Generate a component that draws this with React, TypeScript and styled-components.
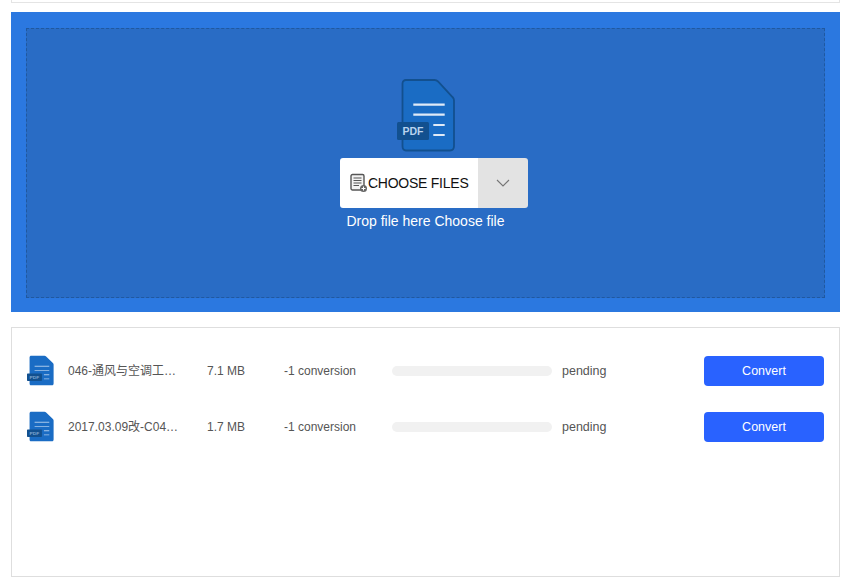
import styled, { createGlobalStyle } from 'styled-components';

type FileItem = {
  name: string;
  size: string;
}

const files: FileItem[] = [
  { name: '046-通风与空调工…', size: '7.1 MB' },
  { name: '2017.03.09改-C04…', size: '1.7 MB' },
];

function PdfIcon({ small }: { small?: boolean }) {
  return (
    <svg width={small ? 28 : 60} height={small ? 31 : 74} viewBox="0 0 60 74" fill="none" preserveAspectRatio="none">
      <path
        d="M9 2H37.500C39 2 40 2.500 41 3.500L55.500 19C56.500 20 57 21 57 22.500V68C57 70.800 55.500 72.500 53 72.500H9C6.800 72.500 5.500 71 5.500 68V5.500C5.500 3.500 7 2 9 2Z"
        fill="#1a6cc4"
        stroke="#12508f"
        strokeWidth={small ? 0 : 1.8}
      />
      <path d="M16.300 26.700H47.700M16.300 36.700H47.700M36.300 47H47.700M36.300 57H47.700" stroke={small ? '#a9c8ea' : '#dfeaf7'} strokeWidth="2.200" />
      <rect x="0" y="44" width="32" height="18" rx="1.500" fill="#12508f" />
      <text x="16" y="57" textAnchor="middle" fontFamily="Liberation Sans, Arial, sans-serif" fontSize="10.500" fontWeight="700" fill={small ? '#7fa6d0' : '#b9d3ee'}>
        PDF
      </text>
    </svg>
  );
}

function ChooseIcon() {
  return (
    <svg width="18" height="20" viewBox="0 0 18 20" fill="none">
      <rect x="1" y="1.500" width="13" height="15.500" rx="1.500" fill="#f2f2f2" stroke="#555" strokeWidth="1.400" />
      <path d="M3.500 5H11.500M3.500 7.500H11.500M3.500 10H11.500M3.500 12.500H9" stroke="#555" strokeWidth="1.100" />
      <circle cx="13.500" cy="15.500" r="3.500" fill="#666" />
      <path d="M13.500 13.500V17.500M11.500 15.500H15.500" stroke="#fff" strokeWidth="1" />
    </svg>
  );
}

export default function App() {
  return (
    <>
      <GlobalStyle />
      <Page>
        <TopStrip />
        <UploadBox>
          <DropZone>
            <LogoWrap>
              <PdfIcon />
            </LogoWrap>
            <ChooseGroup>
              <ChooseButton>
                <ChooseIcon />
                <span>CHOOSE FILES</span>
              </ChooseButton>
              <ChevronButton>
                <svg width="14" height="8" viewBox="0 0 14 8" fill="none">
                  <path d="M1 1L7 7L13 1" stroke="#777" strokeWidth="1.100" />
                </svg>
              </ChevronButton>
            </ChooseGroup>
            <DropText>Drop file here Choose file</DropText>
          </DropZone>
        </UploadBox>
        <FilePanel>
          {files.map((file) => (
            <FileRow key={file.name}>
              <IconCell>
                <PdfIcon small />
              </IconCell>
              <FileName>{file.name}</FileName>
              <FileSize>{file.size}</FileSize>
              <Conversion>-1 conversion</Conversion>
              <ProgressBar />
              <Status>pending</Status>
              <ConvertButton>Convert</ConvertButton>
            </FileRow>
          ))}
        </FilePanel>
      </Page>
    </>
  );
}

const GlobalStyle = createGlobalStyle`
  html, body {
    margin: 0;
    padding: 0;
    background: #fff;
    font-family: "Liberation Sans", Arial, "Noto Sans CJK SC", sans-serif;
  }
  * {
    box-sizing: border-box;
  }
`;
const Page = styled.div`
  width: 849px;
  height: 586px;
  padding: 0 9px 0 11px;
  overflow: hidden;
`;
const TopStrip = styled.div`
  height: 3px;
  margin-bottom: 9px;
  border: 1px solid #e4e4e4;
  border-top: 0;
`;
const UploadBox = styled.section`
  height: 300px;
  padding: 16px 15px 14px;
  background: #2b78e0;
`;
const DropZone = styled.div`
  display: flex;
  flex-direction: column;
  align-items: center;
  height: 270px;
  padding-top: 49px;
  background: #296cc5;
  border: 1px dashed #20589f;
`;
const LogoWrap = styled.div`
  display: flex;
  margin-left: 3px;
`;
const ChooseGroup = styled.div`
  display: flex;
  width: 188px;
  height: 50px;
  margin: 6px 0 0 17px;
  border-radius: 3px;
  overflow: hidden;
`;
const ChooseButton = styled.div`
  display: flex;
  align-items: center;
  width: 138px;
  padding: 0 0 1px 10px;
  background: #fff;
  color: #111;
  font-size: 14px;
  letter-spacing: -0.25px;
  white-space: nowrap;
`;
const ChevronButton = styled.div`
  display: flex;
  align-items: center;
  justify-content: center;
  width: 50px;
  background: #e3e3e3;
`;
const DropText = styled.div`
  margin-top: 5px;
  color: #fff;
  font-size: 14px;
  line-height: 16px;
`;
const FilePanel = styled.section`
  height: 250px;
  margin-top: 15px;
  padding-top: 15px;
  border: 1px solid #dedede;
`;
const FileRow = styled.div`
  display: flex;
  align-items: center;
  height: 56px;
  padding-left: 15px;
  color: #555;
  font-size: 12px;
  line-height: 16px;
`;
const IconCell = styled.div`
  display: flex;
  width: 41px;
  margin-top: -1px;
`;
const FileName = styled.div`
  width: 112px;
  white-space: nowrap;
`;
const FileSize = styled.div`
  width: 65px;
  text-align: right;
`;
const Conversion = styled.div`
  width: 147px;
  padding-left: 39px;
  white-space: nowrap;
`;
const ProgressBar = styled.div`
  width: 160px;
  height: 10px;
  border-radius: 5px;
  background: #f1f1f1;
`;
const Status = styled.div`
  width: 152px;
  padding-left: 10px;
  font-size: 12.5px;
`;
const ConvertButton = styled.button`
  width: 120px;
  height: 30px;
  padding: 0;
  border: 0;
  border-radius: 4px;
  background: #2962ff;
  color: #fff;
  font-family: inherit;
  font-size: 12.5px;
`;
